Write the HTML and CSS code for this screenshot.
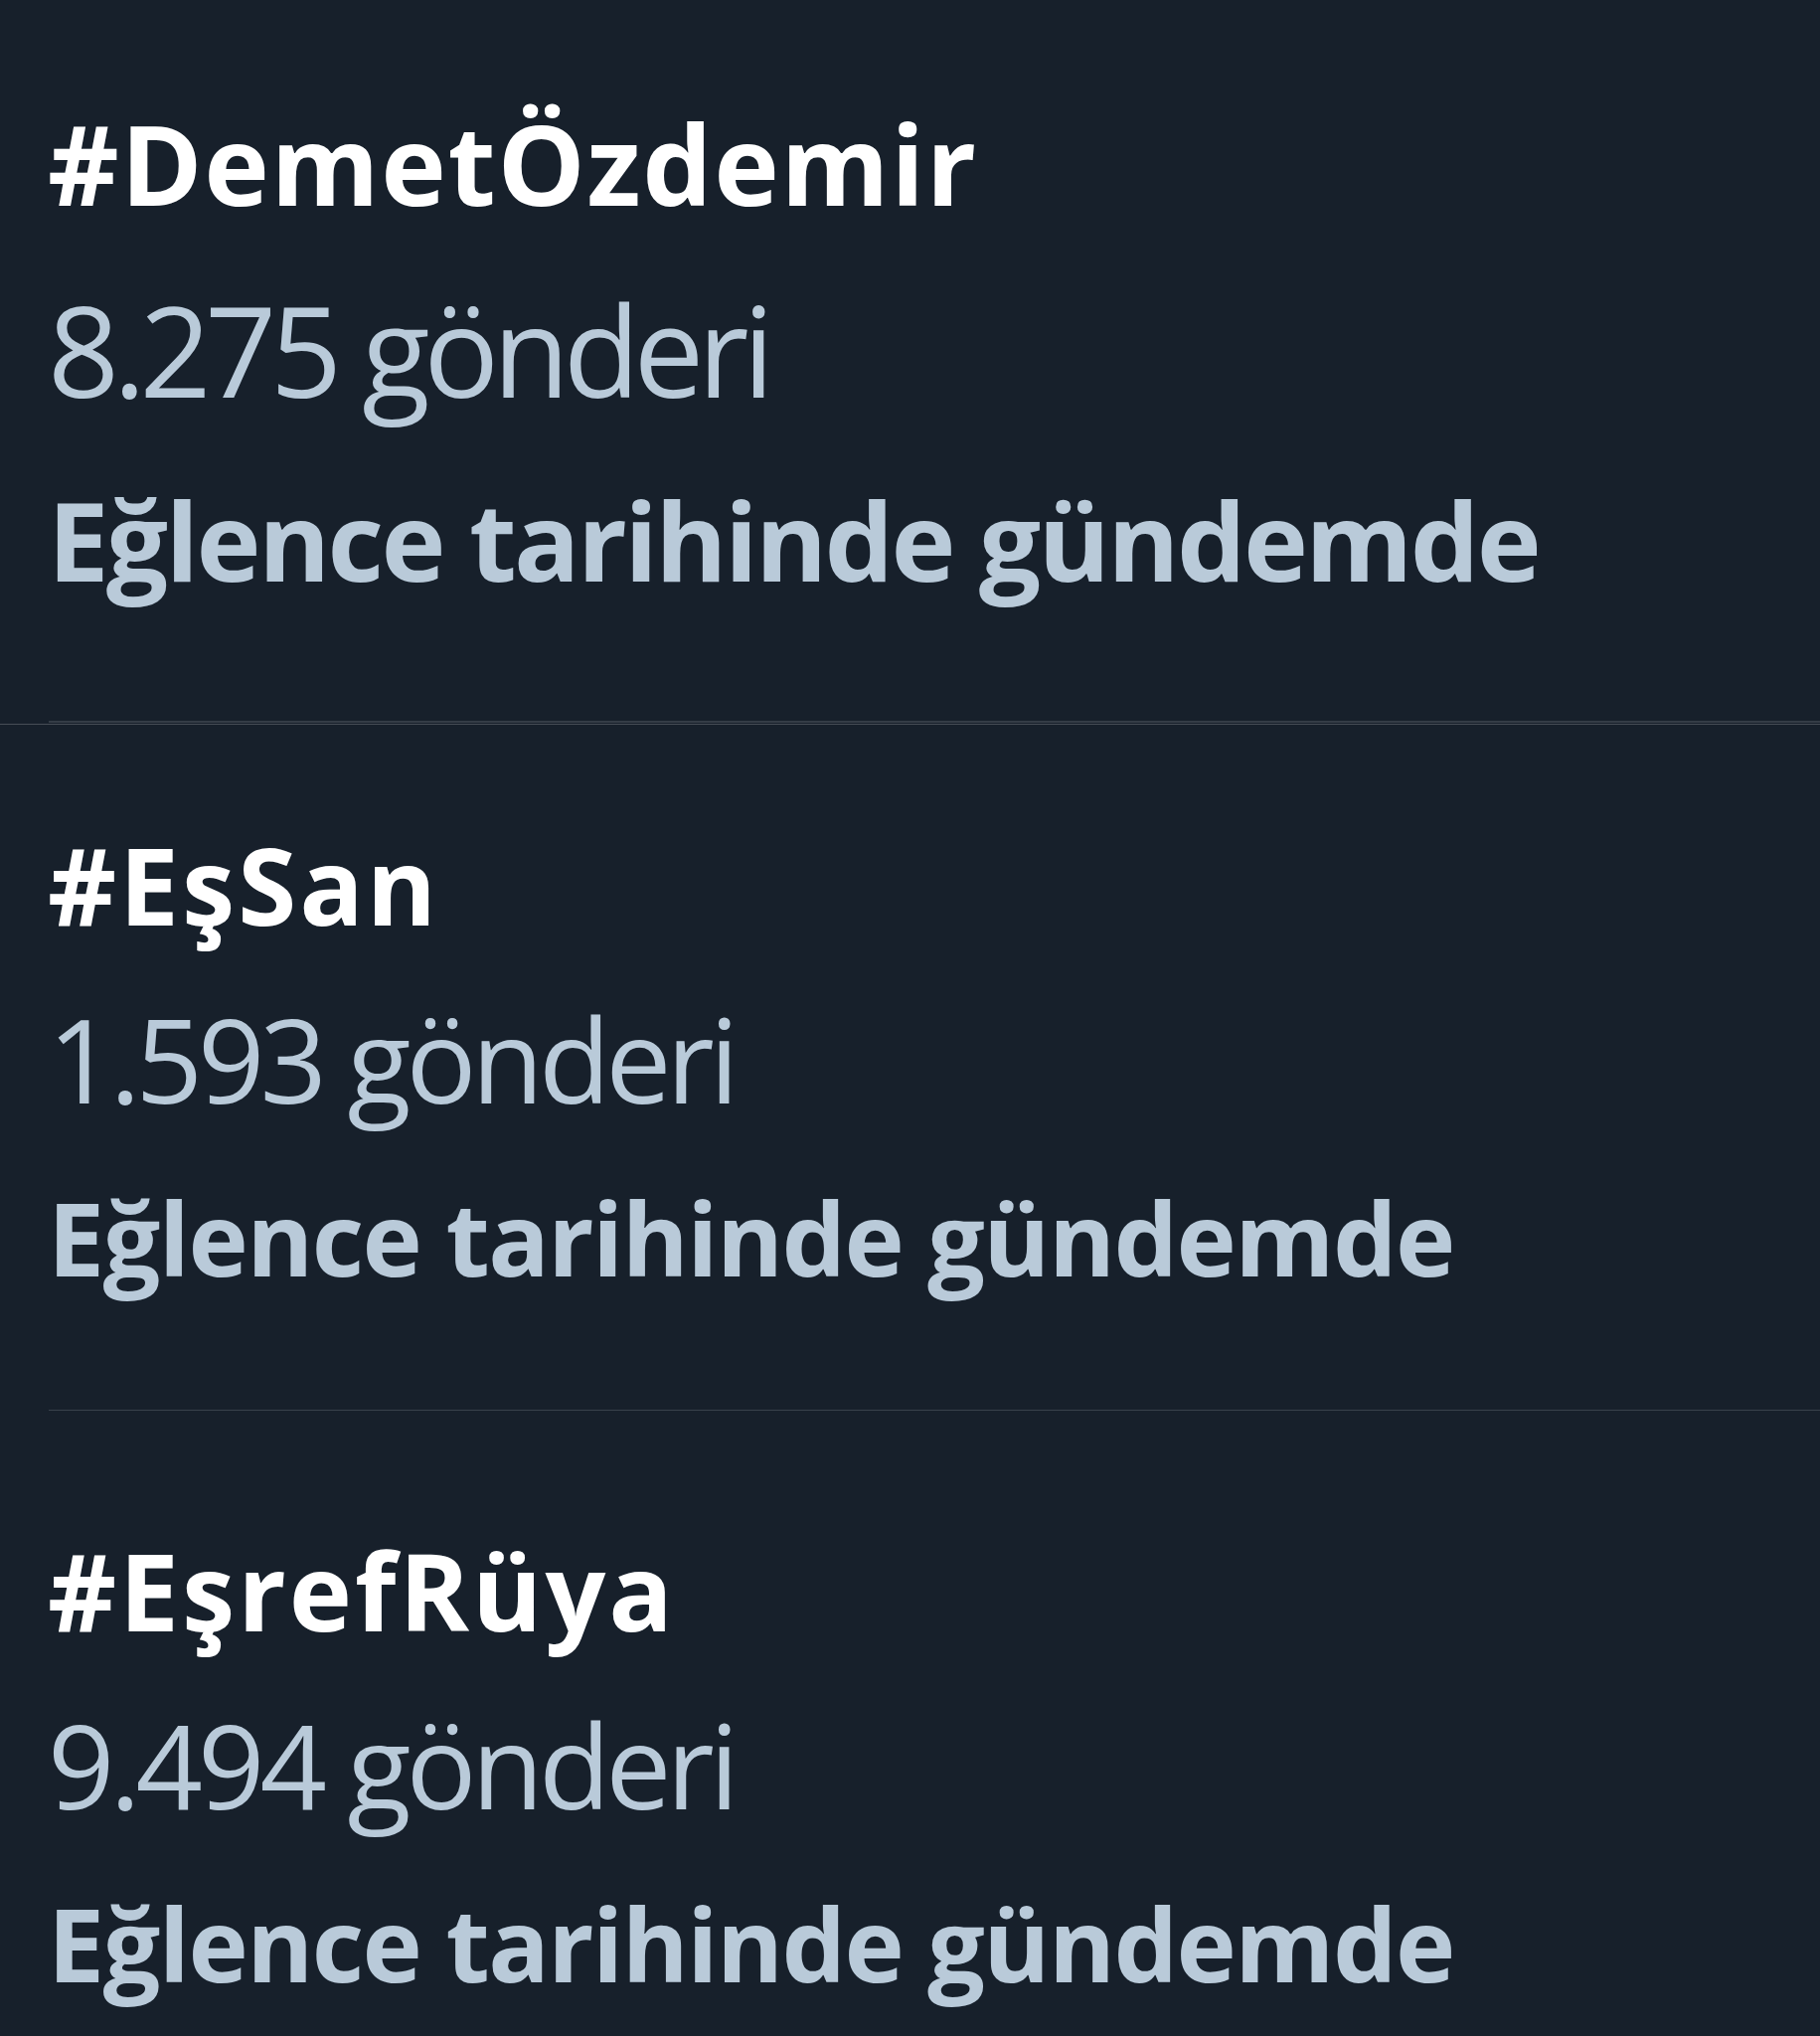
FILE: index.html
```html
<!DOCTYPE html>
<html lang="tr">
<head>
<meta charset="utf-8">
<title>Gündem</title>
<link rel="stylesheet" href="styles.css">
</head>
<body>
<main class="trends">
  <section class="trend trend--lead">
    <div class="trend__title">#DemetÖzdemir</div>
    <div class="trend__count">8.275 gönderi</div>
    <div class="trend__category">Eğlence tarihinde gündemde</div>
  </section>
  <div class="seam"></div>
  <section class="trend trend--mid">
    <div class="trend__title">#EşSan</div>
    <div class="trend__count">1.593 gönderi</div>
    <div class="trend__category">Eğlence tarihinde gündemde</div>
  </section>
  <section class="trend trend--last">
    <div class="trend__title">#EşrefRüya</div>
    <div class="trend__count">9.494 gönderi</div>
    <div class="trend__category">Eğlence tarihinde gündemde</div>
  </section>
</main>
</body>
</html>
```

FILE: styles.css
```css
html, body {
  margin: 0;
  padding: 0;
  background: #17202b;
}

body {
  width: 1831px;
  height: 2048px;
  overflow: hidden;
  font-family: "Open Sans", "Noto Sans", sans-serif;
}

.trends {
  display: flex;
  flex-direction: column;
}

.trend {
  padding: 95px 0 99px 48px;
  position: relative;
}

.trend::after {
  content: "";
  position: absolute;
  left: 49px;
  right: 0;
  bottom: 0;
  height: 1px;
  background: #39424c;
}

.trend__title {
  color: #ffffff;
  font-weight: 700;
  font-size: 107px;
  line-height: 140px;
  letter-spacing: 3px;
  white-space: nowrap;
}

.trend__count {
  color: #b9cad9;
  font-weight: 400;
  font-size: 118px;
  line-height: 209px;
  letter-spacing: -5px;
  white-space: nowrap;
}

.trend__category {
  color: #b9cad9;
  font-weight: 700;
  font-size: 102px;
  line-height: 151px;
  white-space: nowrap;
  letter-spacing: -1.5px;
}

/* first item is rendered slightly larger */
.trend--lead {
  padding-top: 89px;
  padding-bottom: 105px;
}

.trend--lead::after {
  height: 2px;
  background: #343c46;
}

.trend--lead .trend__title {
  font-size: 111px;
  line-height: 150px;
  letter-spacing: 1.7px;
}

.trend--lead .trend__count {
  font-size: 126px;
  line-height: 224px;
  letter-spacing: -6.3px;
}

.trend--lead .trend__category {
  font-size: 110px;
  line-height: 159px;
  letter-spacing: -2.6px;
}

.seam {
  height: 1px;
  margin-top: 1px;
  background: #464d56;
}

.trend--mid {
  padding-top: 91px;
  padding-bottom: 99px;
}

.trend--last {
  padding-top: 111px;
  padding-bottom: 0;
}

.trend--last::after {
  display: none;
}
```
